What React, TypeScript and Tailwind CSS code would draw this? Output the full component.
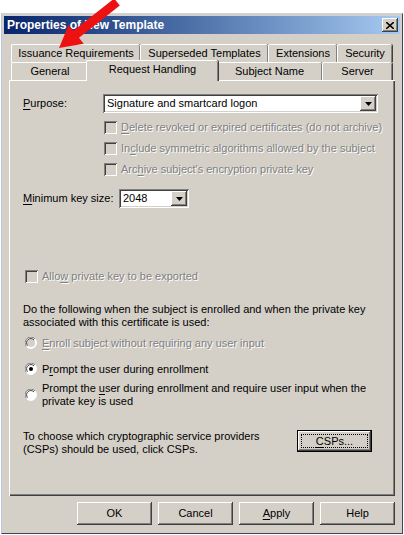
import React from "react";

const raised =
  "shadow-[inset_-1px_-1px_#404040,inset_1px_1px_#ffffff,inset_-2px_-2px_#808080,inset_2px_2px_#d4d0c8]";
const sunken =
  "shadow-[inset_1px_1px_#808080,inset_-1px_-1px_#ffffff,inset_2px_2px_#404040,inset_-2px_-2px_#d4d0c8]";
const disabledText = "text-[#808080] [text-shadow:1px_1px_0_#ffffff]";

function U({ children }: { children: React.ReactNode }) {
  return <span className="underline underline-offset-[2px] decoration-[1px]">{children}</span>;
}

function Checkbox() {
  return <span className={`inline-block w-[13px] h-[13px] shrink-0 bg-[#d4d0c8] ${sunken}`} />;
}

function Radio({ checked, disabled }: { checked?: boolean; disabled?: boolean }) {
  return (
    <svg width="12" height="12" viewBox="0 0 12 12" className="shrink-0">
      <circle cx="6" cy="6" r="5.5" fill="#ffffff" />
      <path d="M10 2 A5.5 5.5 0 0 0 1.5 9.5" stroke="#808080" strokeWidth="1" fill="none" />
      <path d="M10 2 A5.5 5.5 0 0 1 1.5 9.5" stroke="#ffffff" strokeWidth="1" fill="none" />
      <circle cx="6" cy="6" r="4" fill={disabled ? "#d4d0c8" : "#ffffff"} />
      <path d="M9 3 A4.2 4.2 0 0 0 2.6 8.6" stroke="#404040" strokeWidth="1" fill="none" />
      {checked && <circle cx="6" cy="6" r="2" fill="#000000" />}
    </svg>
  );
}

function Select({ value, width }: { value: string; width: string }) {
  return (
    <div className={`flex items-center h-[19px] bg-white p-[2px] ${sunken} ${width}`}>
      <span className="flex-1 pl-[2px] text-black truncate">{value}</span>
      <span className={`w-[16px] h-[15px] bg-[#d4d0c8] flex items-center justify-center ${raised}`}>
        <svg width="7" height="4" viewBox="0 0 7 4">
          <path d="M0 0 H7 L3.5 4 Z" fill="#000" />
        </svg>
      </span>
    </div>
  );
}

function Tab({ label, w, selected }: { label: string; w: string; selected?: boolean }) {
  return (
    <div
      className={`${w} flex items-center justify-center bg-[#d4d0c8] border-l border-t border-white rounded-tl-[2px] rounded-tr-[2px] shadow-[inset_-1px_0_#808080,1px_0_#404040] ${
        selected ? "h-[21px] -mb-[1px] -mx-[2px] relative z-10 pb-[3px]" : "h-[18px]"
      }`}
    >
      {label}
    </div>
  );
}

function Button({ children, w, def }: { children: React.ReactNode; w: string; def?: boolean }) {
  if (def) {
    return (
      <div className={`${w} h-[22px] border border-black bg-[#d4d0c8] flex`}>
        <div className={`flex-1 flex items-center justify-center p-[3px] ${raised}`}>
          <div className="w-full h-full border border-dotted border-black flex items-center justify-center">
            {children}
          </div>
        </div>
      </div>
    );
  }
  return (
    <div className={`${w} h-[23px] bg-[#d4d0c8] flex items-center justify-center ${raised}`}>{children}</div>
  );
}

export default function App() {
  return (
    <div className="relative w-[404px] h-[535px] bg-white overflow-hidden font-['Liberation_Sans',Arial,sans-serif] text-[11px] leading-[13px] text-black">
      <div className="mt-[13px] ml-[1px] w-[402px] h-[521px] bg-[#d4d0c8] border border-t-[#c8d4e6] border-l-[#b8c8e0] border-r-[#3c4658] border-b-[#3c4658] p-[2px]">
        {/* title bar */}
        <div className="h-[18px] flex items-center justify-between bg-gradient-to-r from-[#0a246a] to-[#a6caf0] pl-[3px] pr-[2px]">
          <span className="text-white font-bold text-[12px]">Properties of New Template</span>
          <span className={`w-[16px] h-[14px] bg-[#d4d0c8] flex items-center justify-center ${raised}`}>
            <svg width="8" height="7" viewBox="0 0 8 7">
              <path d="M0 0 L8 7 M8 0 L0 7" stroke="#000" strokeWidth="1.6" />
            </svg>
          </span>
        </div>

        <div className="ml-[5px] w-[386px]">
          {/* tabs */}
          <div className="mt-[10px] pl-[2px]">
            <div className="flex h-[18px]">
              <Tab label="Issuance Requirements" w="w-[129px]" />
              <Tab label="Superseded Templates" w="w-[128px]" />
              <Tab label="Extensions" w="w-[69px]" />
              <Tab label="Security" w="w-[55px]" />
            </div>
            <div className="flex items-end h-[18px]">
              <Tab label="General" w="w-[77px]" />
              <Tab label="Request Handling" w="w-[132px]" selected />
              <Tab label="Subject Name" w="w-[106px]" />
              <Tab label="Server" w="w-[70px]" />
            </div>
          </div>

          {/* panel */}
          <div className="h-[416px] border-l border-t border-white shadow-[inset_-1px_-1px_#404040,inset_-2px_-2px_#808080] pl-[13px] pt-[13px]">
            <div className="flex items-center h-[19px]">
              <span className="w-[80px]">
                <U>P</U>urpose:
              </span>
              <Select value="Signature and smartcard logon" width="w-[275px]" />
            </div>

            <div className={`mt-[4px] ml-[81px] ${disabledText}`}>
              <div className="flex items-center gap-[4px] h-[21px]">
                <Checkbox />
                <span>
                  <U>D</U>elete revoked or expired certificates (do not archive)
                </span>
              </div>
              <div className="flex items-center gap-[4px] h-[21px]">
                <Checkbox />
                <span>
                  In<U>c</U>lude symmetric algorithms allowed by the subject
                </span>
              </div>
              <div className="flex items-center gap-[4px] h-[21px]">
                <Checkbox />
                <span>
                  Arc<U>h</U>ive subject's encryption private key
                </span>
              </div>
            </div>

            <div className="flex items-center h-[19px] mt-[9px]">
              <span className="w-[96px]">
                <U>M</U>inimum key size:
              </span>
              <Select value="2048" width="w-[70px]" />
            </div>

            <div className={`mt-[58px] ml-[2px] flex items-center gap-[4px] h-[21px] ${disabledText}`}>
              <Checkbox />
              <span>
                Allo<U>w</U> private key to be exported
              </span>
            </div>

            <p className="mt-[16px]">
              Do the following when the subject is enrolled and when the private key
              <br />
              associated with this certificate is used:
            </p>

            <div className={`mt-[4px] ml-[2px] flex items-center gap-[5px] h-[20px] ${disabledText}`}>
              <Radio disabled />
              <span>
                <U>E</U>nroll subject without requiring any user input
              </span>
            </div>
            <div className="mt-[6px] ml-[2px] flex items-center gap-[5px] h-[20px]">
              <Radio checked />
              <span>
                P<U>r</U>ompt the user during enrollment
              </span>
            </div>
            <div className="mt-[3px] ml-[2px] flex items-center gap-[5px]">
              <Radio />
              <span>
                Prompt the <U>u</U>ser during enrollment and require user input when the
                <br />
                private key is used
              </span>
            </div>

            <div className="mt-[22px] flex items-start">
              <p className="w-[274px]">
                To choose which cryptographic service providers
                <br />
                (CSPs) should be used, click CSPs.
              </p>
              <Button w="w-[75px]" def>
                <span>
                  <U>C</U>SPs...
                </span>
              </Button>
            </div>
          </div>

          {/* buttons */}
          <div className="mt-[6px] flex justify-end gap-[6px]">
            <Button w="w-[75px]">OK</Button>
            <Button w="w-[75px]">Cancel</Button>
            <Button w="w-[75px]">
              <span>
                <U>A</U>pply
              </span>
            </Button>
            <Button w="w-[75px]">Help</Button>
          </div>
        </div>
      </div>

      {/* red annotation arrow */}
      <svg className="absolute left-0 top-0" width="404" height="60" viewBox="0 0 404 60">
        <polygon
          points="119.8,5.5 114.2,-1.5 73.4,30.8 68.7,24.9 59,48 83.7,43.7 79,37.8"
          fill="#ee1111"
        />
      </svg>
    </div>
  );
}
